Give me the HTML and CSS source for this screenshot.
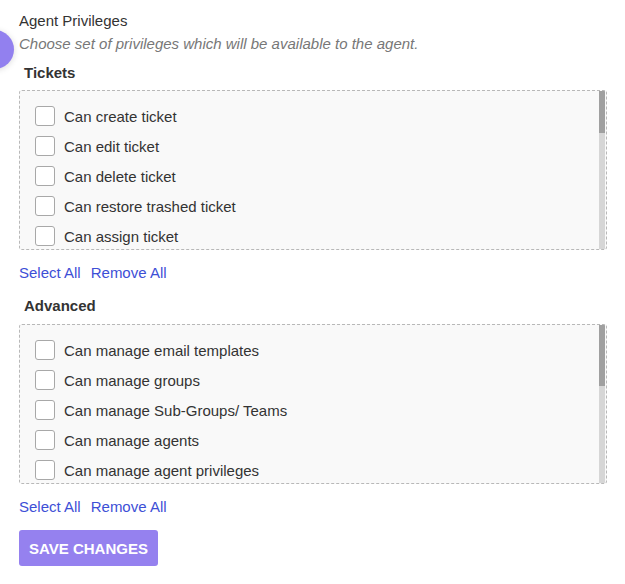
FILE: index.html
```html
<!DOCTYPE html>
<html>
<head>
<meta charset="utf-8">
<link rel="stylesheet" href="styles.css">
</head>
<body>
<div class="dot"></div>
<div class="page">
  <div class="title">Agent Privileges</div>
  <div class="desc">Choose set of privileges which will be available to the agent.</div>

  <div class="group-label first">Tickets</div>
  <div class="box">
    <div class="list">
      <label class="row"><span class="cb"></span>Can create ticket</label>
      <label class="row"><span class="cb"></span>Can edit ticket</label>
      <label class="row"><span class="cb"></span>Can delete ticket</label>
      <label class="row"><span class="cb"></span>Can restore trashed ticket</label>
      <label class="row"><span class="cb"></span>Can assign ticket</label>
    </div>
    <div class="scrollbar"><div class="thumb thumb-tickets"></div></div>
  </div>
  <div class="links"><a href="#">Select All</a><a href="#">Remove All</a></div>

  <div class="group-label">Advanced</div>
  <div class="box second">
    <div class="list">
      <label class="row"><span class="cb"></span>Can manage email templates</label>
      <label class="row"><span class="cb"></span>Can manage groups</label>
      <label class="row"><span class="cb"></span>Can manage Sub-Groups/ Teams</label>
      <label class="row"><span class="cb"></span>Can manage agents</label>
      <label class="row"><span class="cb"></span>Can manage agent privileges</label>
    </div>
    <div class="scrollbar"><div class="thumb thumb-advanced"></div></div>
  </div>
  <div class="links"><a href="#">Select All</a><a href="#">Remove All</a></div>

  <button class="save">SAVE CHANGES</button>
</div>
</body>
</html>
```

FILE: styles.css
```css
html, body {
  margin: 0;
  padding: 0;
  background: #fff;
}
body {
  font-family: "Liberation Sans", Arial, sans-serif;
  font-size: 15px;
  color: #333;
  position: relative;
  overflow: hidden;
}
.dot {
  position: absolute;
  left: -25px;
  top: 30px;
  width: 39px;
  height: 39px;
  border-radius: 50%;
  background: #9280ef;
  box-shadow: 0 1px 6px rgba(0, 0, 0, 0.15);
}
.page {
  padding: 11px 18px 0 19px;
}
.title {
  line-height: 20px;
  color: #333;
}
.desc {
  margin-top: 3px;
  line-height: 20px;
  font-style: italic;
  color: #777;
}
.group-label {
  margin-top: 13px;
  padding-left: 5px;
  line-height: 20px;
  font-weight: bold;
  color: #333;
}
.group-label.first {
  margin-top: 9px;
}
.box {
  margin-top: 7px;
  width: 588px;
  height: 160px;
  box-sizing: border-box;
  border: 1px dashed #b8b8b8;
  border-radius: 3px;
  background: #f9f9f9;
  display: flex;
  overflow: hidden;
}
.box.second {
  margin-top: 8px;
}
.list {
  flex: 1;
  overflow: hidden;
  padding: 10px 0 0 15px;
}
.scrollbar {
  width: 6px;
  flex: none;
  background: #d6d6d6;
  margin-right: 1px;
}
.thumb {
  background: #a0a0a0;
}
.thumb-tickets {
  height: 42px;
}
.thumb-advanced {
  height: 61px;
}
.row {
  display: flex;
  align-items: center;
  height: 30px;
  gap: 9px;
  color: #333;
}
.cb {
  width: 20px;
  height: 20px;
  box-sizing: border-box;
  border: 1px solid #a8a8a8;
  border-radius: 3px;
  background: #fff;
  flex: none;
}
.links {
  margin-top: 13px;
  line-height: 20px;
  display: flex;
  gap: 10px;
}
.links a {
  color: #3d4fd6;
  text-decoration: none;
}
.save {
  display: block;
  margin-top: 13px;
  width: 139px;
  height: 36px;
  border: none;
  border-radius: 3px;
  background: #9581ef;
  color: #fff;
  font-family: "Liberation Sans", Arial, sans-serif;
  font-weight: bold;
  font-size: 15px;
  padding: 0;
}
```
